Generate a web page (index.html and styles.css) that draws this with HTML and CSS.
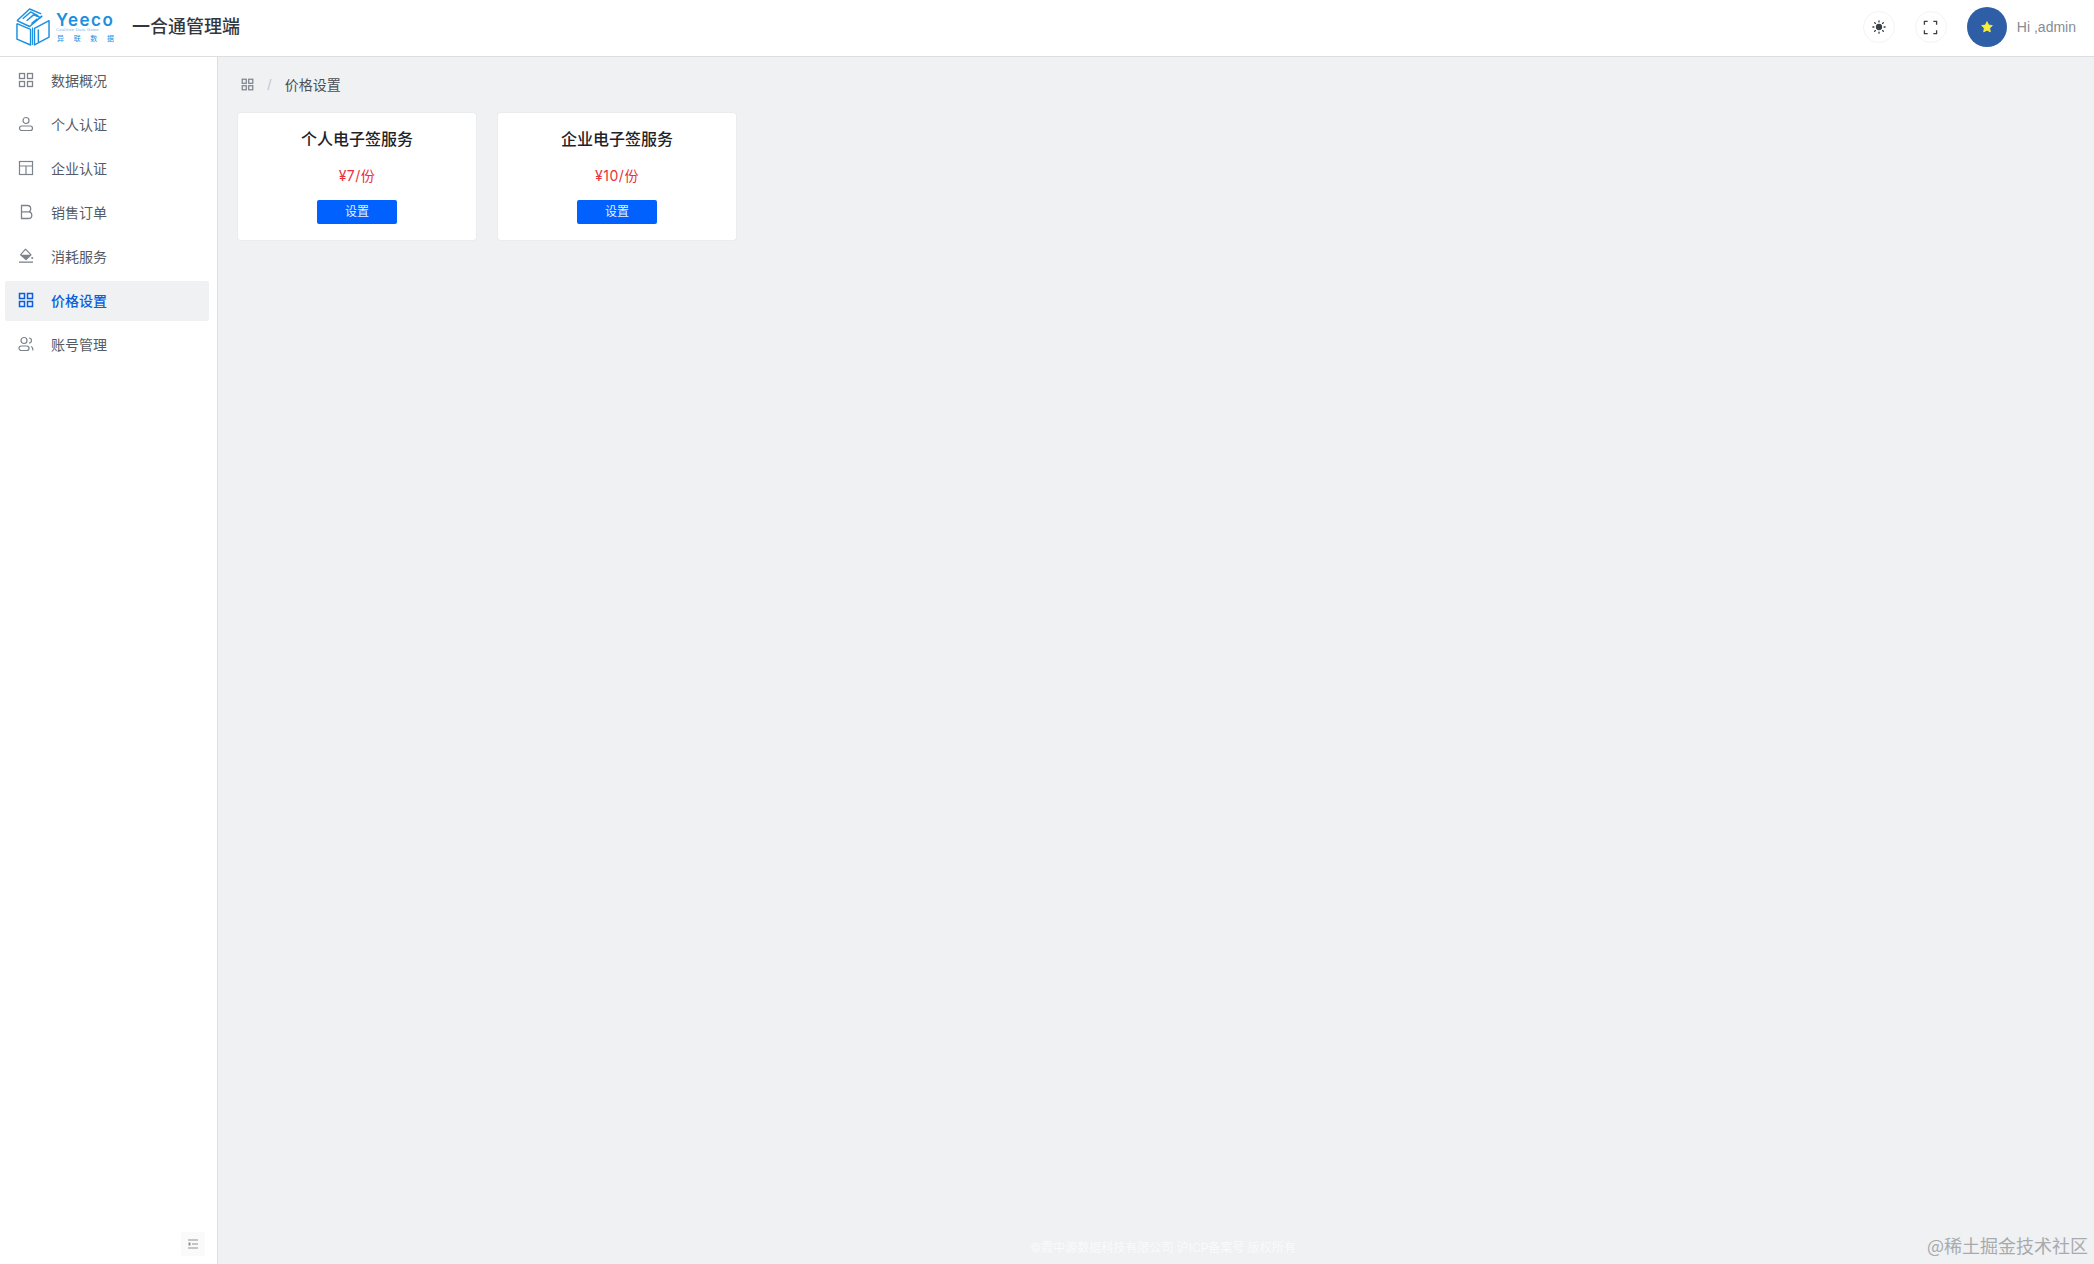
FILE: index.html
```html
<!DOCTYPE html>
<html lang="zh-CN">
<head>
<meta charset="utf-8">
<title>一合通管理端</title>
<link rel="stylesheet" href="styles.css">
</head>
<body>
<div class="app">
  <header class="header">
    <div class="brand">
      <svg class="logo-mark" viewBox="0 0 35 39" fill="none" stroke="#1c8fe0" stroke-width="1.500" stroke-linejoin="round">
        <path d="M1 13 L14 1 L26 6 M1 13 L14 19 L27 8"/>
        <path d="M7 11 L15 4 L23 8 M11 13 L18 7 L26 10 M16 16 L22 11"/>
        <path d="M1 16 V32 L15 38 V22 L1 16"/>
        <path d="M19 38 L34 30 V13 L19 21 Z"/>
        <path d="M23 22 V35"/>
        <path d="M17 20 V38" stroke-width="1"/>
      </svg>
      <div class="logo-words">
        <span class="logo-name">Yeeco</span>
        <span class="logo-tag">Coalition Data Game</span>
        <span class="logo-cn"><i>异</i><i>联</i><i>数</i><i>据</i></span>
      </div>
      <span class="app-title">一合通管理端</span>
    </div>
    <div class="header-actions">
      <button class="round-btn" aria-label="主题">
        <svg viewBox="0 0 16 16" width="14" height="14" fill="#3a3f46"><circle cx="8" cy="8" r="3.600"/><g stroke="#3a3f46" stroke-width="1.500" stroke-linecap="round"><path d="M8 1v1.200M8 13.800V15M1 8h1.200M13.800 8H15M3 3l.9.9M12.100 12.100l.9.9M3 13l.9-.9M12.100 3.900l.9-.9"/></g></svg>
      </button>
      <button class="round-btn" aria-label="全屏">
        <svg viewBox="0 0 16 16" width="15" height="15" fill="none" stroke="#3a3f46" stroke-width="1.400"><path d="M1.500 5V1.500H5M11 1.500h3.500V5M14.500 11v3.500H11M5 14.500H1.500V11"/></svg>
      </button>
      <div class="avatar">
        <svg viewBox="0 0 16 16" width="12" height="12"><path d="M8 .8l2.200 4.600 5 .7-3.600 3.500.9 5L8 12.200 3.500 14.600l.9-5L.8 6.100l5-.7z" fill="#f8ee3c" stroke="#f8ee3c" stroke-linejoin="round"/></svg>
      </div>
      <span class="user-name">Hi ,admin</span>
    </div>
  </header>
  <div class="body">
    <aside class="sidebar">
      <nav class="menu">
        <a class="menu-item">
          <svg class="menu-icon" viewBox="0 0 16 16" fill="none" stroke="currentColor" stroke-width="1.300"><rect x="1.500" y="1.500" width="5" height="5"/><rect x="9.500" y="1.500" width="5" height="5"/><rect x="1.500" y="9.500" width="5" height="5"/><rect x="9.500" y="9.500" width="5" height="5"/></svg>
          <span>数据概况</span>
        </a>
        <a class="menu-item">
          <svg class="menu-icon" viewBox="0 0 16 16" fill="none" stroke="currentColor" stroke-width="1.200"><circle cx="8" cy="4.500" r="3"/><rect x="1.500" y="10" width="13" height="4.500" rx="2.250"/></svg>
          <span>个人认证</span>
        </a>
        <a class="menu-item">
          <svg class="menu-icon" viewBox="0 0 16 16" fill="none" stroke="currentColor" stroke-width="1.200"><rect x="1.500" y="1.500" width="13" height="13"/><path d="M1.500 6h13M8 6v8.500"/></svg>
          <span>企业认证</span>
        </a>
        <a class="menu-item">
          <svg class="menu-icon" viewBox="0 0 16 16" fill="none" stroke="currentColor" stroke-width="1.300"><path d="M3.500 1.500h6a3.200 3.200 0 0 1 0 6.400h-6zM3.500 7.900h7a3.300 3.300 0 0 1 0 6.600h-7z"/></svg>
          <span>销售订单</span>
        </a>
        <a class="menu-item">
          <svg class="menu-icon" viewBox="0 0 16 16"><path d="M7.500 1.200L13 6.800 8 11.500 2.500 6.800z" fill="none" stroke="currentColor" stroke-width="1.200" stroke-linejoin="round"/><path d="M2.500 6.800h10.500L8 11.500z" fill="currentColor"/><circle cx="14.200" cy="10" r="1.100" fill="currentColor"/><rect x="1" y="13.500" width="14" height="1.300" fill="currentColor"/></svg>
          <span>消耗服务</span>
        </a>
        <a class="menu-item is-active">
          <svg class="menu-icon" viewBox="0 0 16 16" fill="none" stroke="currentColor" stroke-width="1.500"><rect x="1.500" y="1.500" width="5" height="5"/><rect x="9.500" y="1.500" width="5" height="5"/><rect x="1.500" y="9.500" width="5" height="5"/><rect x="9.500" y="9.500" width="5" height="5"/></svg>
          <span>价格设置</span>
        </a>
        <a class="menu-item">
          <svg class="menu-icon" viewBox="0 0 16 16" fill="none" stroke="currentColor" stroke-width="1.200"><circle cx="6" cy="4.500" r="3"/><rect x="1" y="10" width="10" height="4.500" rx="2.250"/><path d="M11 2a2.500 2.500 0 0 1 0 5M13 10.500c1 .4 1.800 1.200 1.800 2.300v1.700"/></svg>
          <span>账号管理</span>
        </a>
      </nav>
      <button class="collapse-btn" aria-label="收起">
        <svg viewBox="0 0 12 12" width="12" height="12" fill="none" stroke="#8b9097" stroke-width="1"><path d="M1 2h10M1 10h10M5 6h6"/><path d="M2.500 4.500v3" stroke-width="2"/></svg>
      </button>
    </aside>
    <main class="content">
      <div class="breadcrumb">
        <svg class="crumb-icon" viewBox="0 0 16 16" fill="none" stroke="currentColor" stroke-width="1.500"><rect x="1.500" y="1.500" width="5" height="5"/><rect x="9.500" y="1.500" width="5" height="5"/><rect x="1.500" y="9.500" width="5" height="5"/><rect x="9.500" y="9.500" width="5" height="5"/></svg>
        <span class="crumb-sep">/</span>
        <span class="crumb-current">价格设置</span>
      </div>
      <div class="cards">
        <section class="card">
          <h2 class="card-title">个人电子签服务</h2>
          <p class="card-price">¥7/份</p>
          <button class="card-btn">设置</button>
        </section>
        <section class="card">
          <h2 class="card-title">企业电子签服务</h2>
          <p class="card-price">¥10/份</p>
          <button class="card-btn">设置</button>
        </section>
      </div>
      <footer class="footer">
        <span class="copyright">©霞中源数据科技有限公司 沪ICP备案号 版权所有</span>
      </footer>
      <span class="watermark">@稀土掘金技术社区</span>
    </main>
  </div>
</div>
</body>
</html>
```
FILE: styles.css
```css
* { box-sizing: border-box; }
html, body { margin: 0; height: 100%; }
body {
  font-family: "Inter", "Noto Sans CJK SC", sans-serif;
  color: #4e5969;
  background: #eff1f3;
}
.app { height: 1264px; display: flex; flex-direction: column; overflow: hidden; }

.header {
  height: 57px;
  flex: none;
  background: #fff;
  border-bottom: 1px solid #dcdee0;
  display: flex;
  align-items: center;
  justify-content: space-between;
  padding: 0 18px 2px 16px;
}
.brand { display: flex; align-items: center; }
.logo-mark { width: 34px; height: 38px; flex: none; }
.logo-words { display: flex; flex-direction: column; margin-left: 6px; width: 59px; color: #1c8fe0; padding-top: 3px; }
.logo-name { font: 600 17px/14px "Inter", sans-serif; letter-spacing: 1.500px; }
.logo-tag { font: 400 4px/6px "Liberation Sans", sans-serif; letter-spacing: .3px; color: #6fb5e6; white-space: nowrap; }
.logo-cn { display: flex; justify-content: space-between; font-size: 7px; line-height: 10px; margin-top: 1px; padding: 0 1px; }
.logo-cn i { font-style: normal; }
.app-title { margin-left: 17px; font-size: 18px; font-weight: 500; color: #33373d; line-height: 24px; }

.header-actions { display: flex; align-items: center; }
.round-btn {
  width: 32px; height: 32px;
  padding: 0;
  border: 1px solid #f2f3f5;
  border-radius: 50%;
  background: #fff;
  display: flex; align-items: center; justify-content: center;
  margin-right: 20px;
}
.avatar {
  width: 40px; height: 40px;
  border-radius: 50%;
  background: #2e5fa6;
  display: flex; align-items: center; justify-content: center;
}
.user-name { margin-left: 10px; font: 400 14px/20px "Liberation Sans", sans-serif; color: #868c94; white-space: nowrap; }

.body { flex: 1; display: flex; min-height: 0; }
.sidebar {
  width: 218px;
  flex: none;
  background: #fff;
  border-right: 1px solid #dcdee0;
  display: flex;
  flex-direction: column;
  justify-content: space-between;
  padding: 4px 8px 8px 5px;
}
.menu { display: flex; flex-direction: column; gap: 4px; }
.menu-item {
  height: 40px;
  display: flex;
  align-items: center;
  padding: 0 0 2px 13px;
  border-radius: 2px;
  font-size: 14px;
  color: #555b64;
}
.menu-icon { width: 16px; height: 16px; flex: none; color: #7d838b; margin-right: 17px; }
.is-active { background: #eff1f3; color: #0b5fdc; font-weight: 500; }
.is-active .menu-icon { color: #0b5fdc; }
.collapse-btn {
  align-self: flex-end;
  width: 24px; height: 24px;
  margin-right: 4px;
  padding: 0;
  border: 0;
  border-radius: 2px;
  background: #fafafb;
  display: flex; align-items: center; justify-content: center;
}

.content { flex: 1; position: relative; padding: 0 20px; min-width: 0; }
.breadcrumb { height: 56px; display: flex; align-items: center; font-size: 14px; padding-bottom: 2px; }
.crumb-icon { width: 13px; height: 13px; color: #7d838b; margin-left: 3px; }
.crumb-sep { margin: 0 13px; color: #c2c6cb; font-size: 13px; }
.crumb-current { color: #4a4f57; }
.cards { display: flex; gap: 22px; }
.card {
  width: 238px;
  height: 127px;
  background: #fff;
  border-radius: 2px;
  box-shadow: 0 0 1px rgba(0, 0, 0, .2);
  display: flex;
  flex-direction: column;
  align-items: center;
  padding-top: 14px;
}
.card-title { margin: 0; font-size: 16px; font-weight: 500; line-height: 24px; color: #1f2329; }
.card-price { margin: 14px 0 0; font-size: 14px; line-height: 22px; color: #e8323c; letter-spacing: .5px; }
.card-btn {
  margin-top: 13px;
  width: 80px; height: 24px;
  padding: 0;
  border: 0;
  border-radius: 2px;
  background: #0061ff;
  color: #e8f1ff;
  font: 400 12px/24px "Inter", "Noto Sans CJK SC", sans-serif;
}
.footer {
  position: absolute;
  left: 14px; right: 0; bottom: 6px;
  text-align: center;
}
.copyright { font-size: 12px; line-height: 20px; color: #fafbfb; white-space: nowrap; }
.watermark {
  position: absolute;
  right: 6px; bottom: 6px;
  font: 400 18px/26px "Noto Sans CJK SC", sans-serif;
  color: #a8aaad;
  white-space: nowrap;
}
```
